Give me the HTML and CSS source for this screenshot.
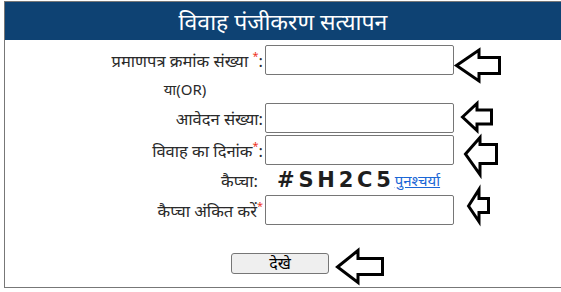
FILE: index.html
```html
<!DOCTYPE html>
<html lang="hi">
<head>
	<meta name="viewport" content="width=device-width, initial-scale=1">
	<title>विवाह पंजीकरण सत्यापन</title>
	<link rel="stylesheet" href="styles.css">
</head>
<body>
<div class="panel">
	<h2 class="panel-title">विवाह पंजीकरण सत्यापन</h2>

	<form class="verify-form">
		<label class="field-label">प्रमाणपत्र क्रमांक संख्या <sup class="req">*</sup>:</label>
		<input class="field-input" type="text">
		<svg class="arrow arrow-1" width="46" height="35" viewBox="0 0 46 35">
			<polygon points="1.5,17.5 24,2 24,9.5 44.5,9.5 44.5,25.5 24,25.5 24,33" />
		</svg>

		<div class="or-text">या(OR)</div>

		<label class="field-label">आवेदन संख्या:</label>
		<input class="field-input" type="text">
		<svg class="arrow arrow-2" width="32" height="30" viewBox="0 0 32 30">
			<polygon points="1.5,15 16,1.5 16,8 30.5,8 30.5,22 16,22 16,28.5" />
		</svg>

		<label class="field-label">विवाह का दिनांक<sup class="req">*</sup>:</label>
		<input class="field-input" type="text">
		<svg class="arrow arrow-3" width="34" height="40" viewBox="0 0 34 40">
			<polygon points="1.5,18 16,1.5 16,8.5 32.5,8.5 32.5,27.5 16,27.5 16,38.5" />
		</svg>

		<label class="field-label captcha-label">कैप्चा:</label>
		<div class="captcha">
			<span class="captcha-code">#SH2C5</span>
			<a class="refresh" href="#">पुनश्चर्या</a>
		</div>

		<label class="field-label">कैप्चा अंकित करें<sup class="req">*</sup></label>
		<input class="field-input" type="text">
		<svg class="arrow arrow-4" width="23" height="35" viewBox="0 0 23 35">
			<polygon points="1.5,18 12,1.5 12,10.5 21.5,10.5 21.5,24.5 12,24.5 12,33.5" />
		</svg>

		<div class="actions">
			<button class="view-btn" type="button">देखे</button>
			<svg class="arrow arrow-5" width="48" height="35" viewBox="0 0 48 35">
				<polygon points="1.5,18 22,1.5 22,9.5 46.5,9.5 46.5,25.5 22,25.5 22,33.5" />
			</svg>
		</div>
	</form>
</div>
</body>
</html>
```

FILE: styles.css
```css
* {
	box-sizing: border-box;
	margin: 0;
	padding: 0;
}

body {
	font-family: 'Noto Sans', 'Noto Sans Devanagari', 'Liberation Sans', sans-serif;
	background: #fff;
	color: #2a2a2a;
}

.panel {
	margin: 1px 0 0 4px;
	width: 558px;
	height: 287px;
	border: 1px solid #777;
}

.panel-title {
	background: #0e4273;
	color: #fff;
	font-size: 23px;
	font-weight: normal;
	height: 38px;
	line-height: 38px;
	text-align: center;
}

.verify-form {
	display: grid;
	grid-template-columns: 156px 189px 52px;
	grid-template-rows: 30px 24px 30px 30px 26px 30px 24px 21px;
	column-gap: 2px;
	row-gap: 2px;
	margin: 5px 0 0 102px;
}

.field-label {
	grid-column: 1;
	align-self: center;
	text-align: right;
	font-size: 16.5px;
	white-space: nowrap;
}

.req {
	color: #e32;
	font-size: 11px;
}

.captcha-label {
	padding-right: 5px;
}

.or-text {
	grid-column: 1;
	align-self: center;
	text-align: center;
	font-size: 15px;
}

.field-input {
	grid-column: 2;
	height: 30px;
	border: 1px solid #767676;
	border-radius: 2px;
	background: #fff;
}

.arrow {
	grid-column: 3;
	align-self: start;
	overflow: visible;
}

.arrow polygon {
	fill: #fff;
	stroke: #000;
	stroke-width: 3;
	stroke-linejoin: miter;
}

.arrow-1 { margin: 3px 0 0 -1px; }
.arrow-2 { margin: -1px 0 0 5px; }
.arrow-3 { margin: 1px 0 0 8px; }
.arrow-4 { margin: -7px 0 0 11px; }

.captcha {
	grid-column: 2 / 4;
	display: flex;
	align-items: center;
	padding-left: 12px;
}

.captcha-code {
	font-family: 'DejaVu Sans', sans-serif;
	font-weight: bold;
	font-size: 21px;
	letter-spacing: 3.8px;
	color: #1e1e1e;
}

.refresh {
	color: #1a66d6;
	font-size: 15px;
}

.actions {
	grid-column: 1 / -1;
	grid-row: 8;
	display: flex;
	justify-content: center;
	align-items: flex-start;
	gap: 7px;
}

.view-btn {
	width: 98px;
	height: 21px;
	background: #efefef;
	border: 1px solid #767676;
	border-radius: 3px;
	font-family: inherit;
	font-size: 16px;
	line-height: 17px;
	color: #000;
}

.arrow-5 {
	margin-top: -4px;
}
```
